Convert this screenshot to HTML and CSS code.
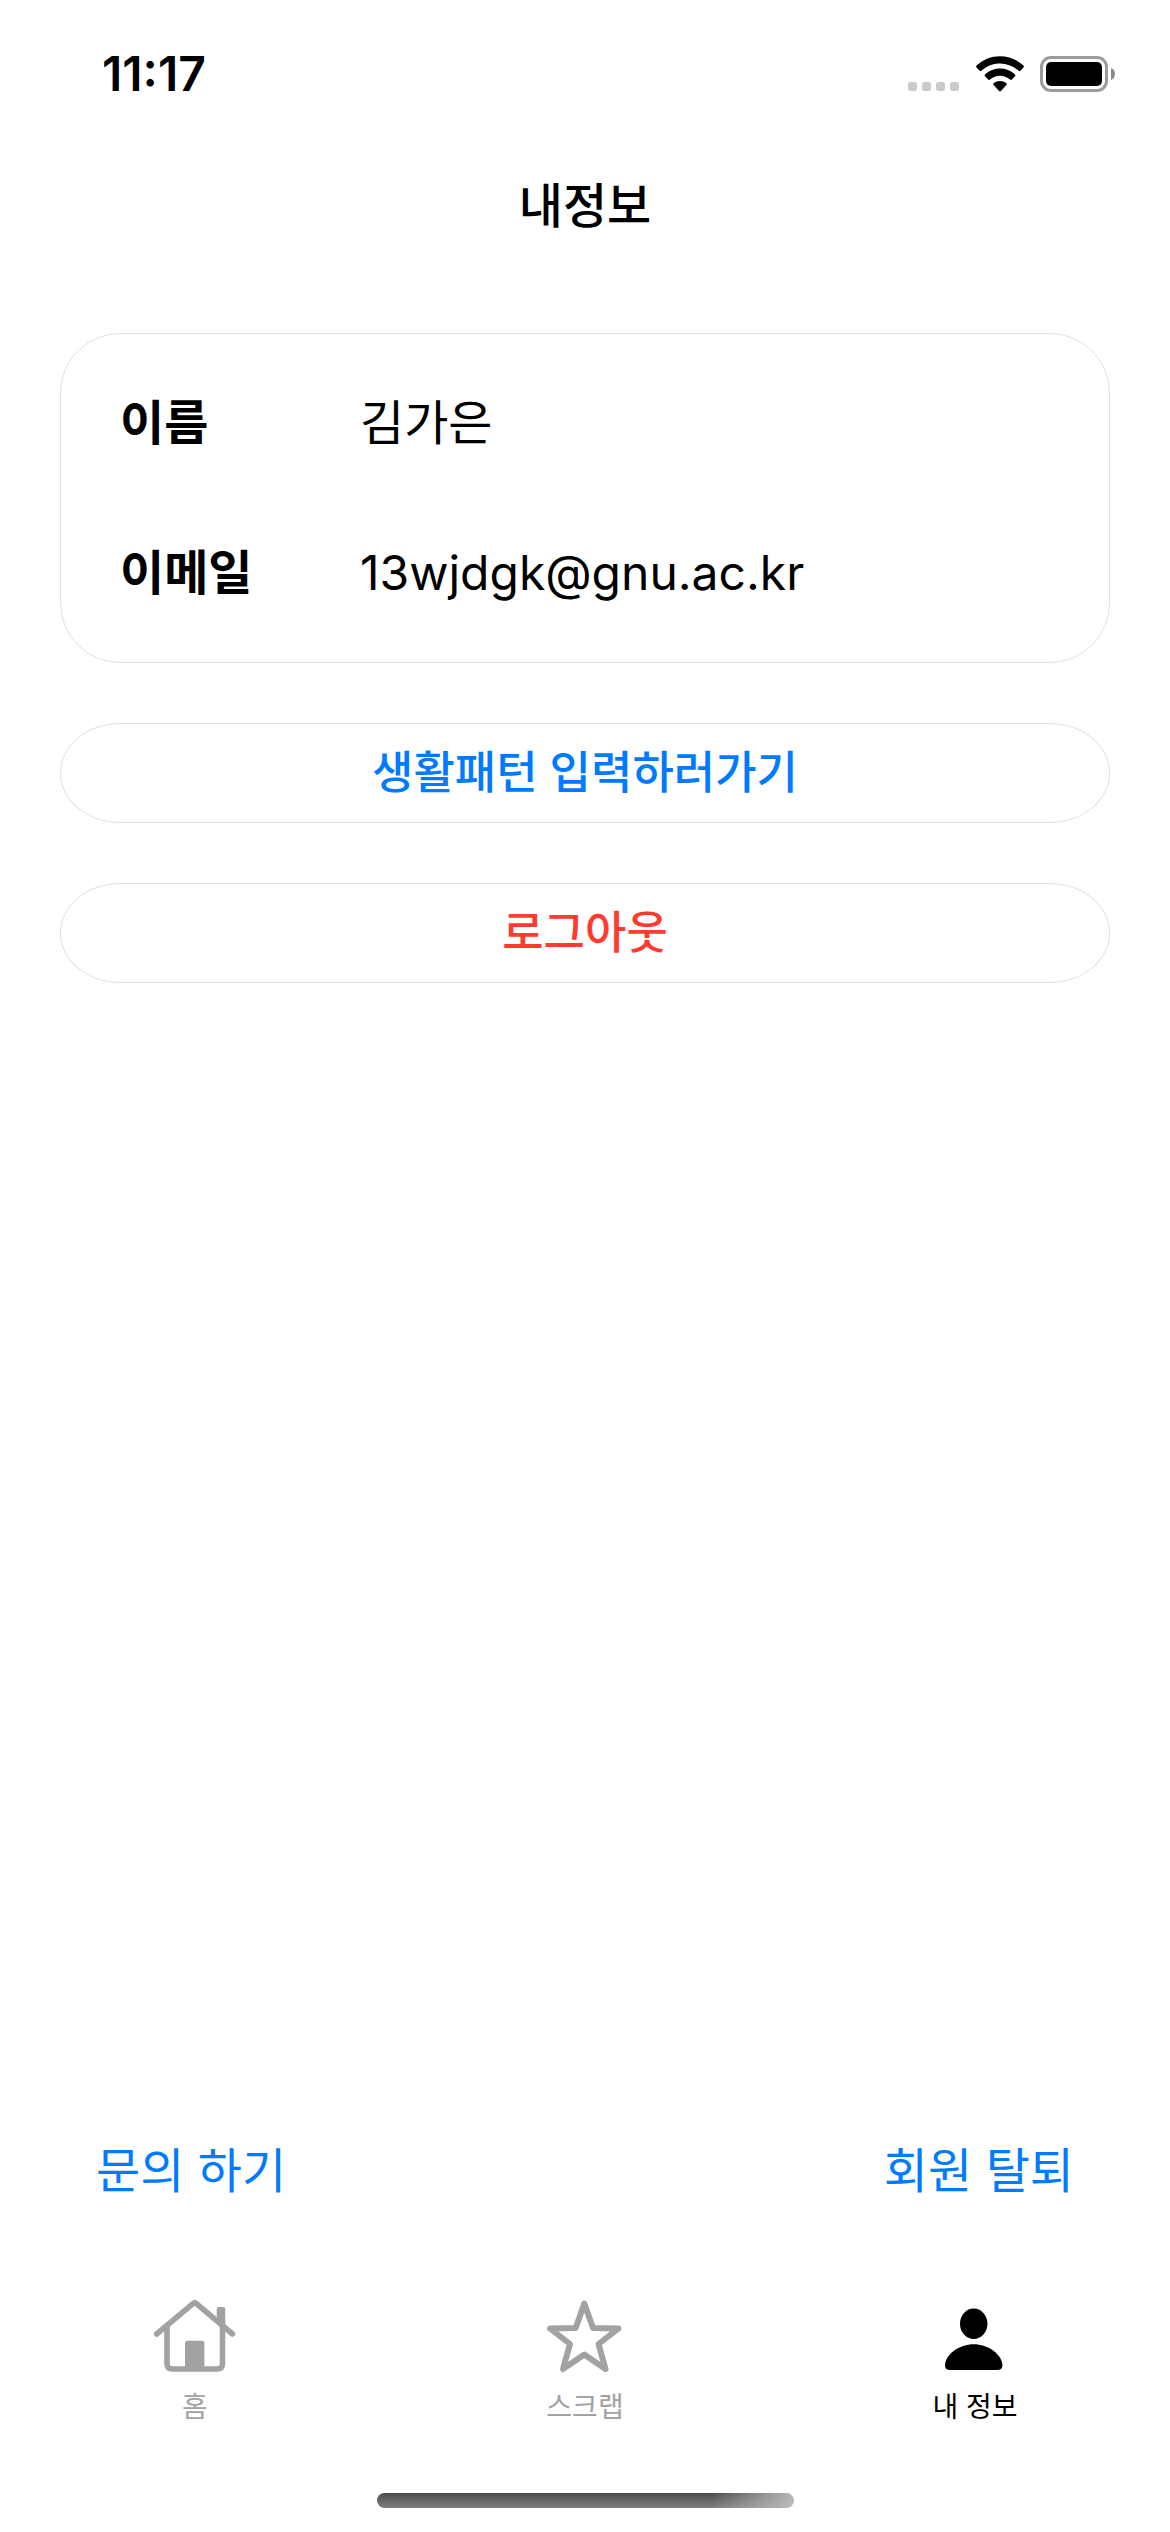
FILE: index.html
```html
<!DOCTYPE html>
<html lang="ko">
<head>
  <meta charset="utf-8">
  <meta name="viewport" content="width=device-width, initial-scale=1">
  <title>내정보</title>
  <link rel="stylesheet" href="styles.css">
</head>
<body class="screen">
  <div class="status-bar">
    <time class="clock">11:17</time>
    <div class="status-icons">
      <svg class="signal" width="52" height="36" viewBox="0 0 52 36" fill="#cacaca" aria-hidden="true">
        <rect x="0" y="26" width="9" height="9" rx="2.5"/>
        <rect x="14" y="26" width="9" height="9" rx="2.5"/>
        <rect x="28" y="26" width="9" height="9" rx="2.5"/>
        <rect x="42" y="26" width="9" height="9" rx="2.5"/>
      </svg>
      <svg class="wifi" width="48" height="36" viewBox="0 0 48 36" aria-hidden="true">
        <path d="M0.6 9.6 C13.5-2.9 34.5-2.9 47.4 9.6 Q48.3 10.5 47.4 11.4 L44.4 14.8 Q43.6 15.6 42.7 14.8 C32 4.9 16 4.9 5.3 14.8 Q4.4 15.6 3.6 14.8 L0.6 11.4 Q-0.3 10.5 0.6 9.6Z"/>
        <path d="M9 18.4 C17.5 10.6 30.5 10.6 39 18.4 Q39.9 19.3 39 20.2 L35.8 23.5 Q35 24.3 34.1 23.5 C28.2 18.4 19.8 18.4 13.9 23.5 Q13 24.3 12.2 23.5 L9 20.2 Q8.1 19.3 9 18.4Z"/>
        <path d="M17.6 27.3 C21.2 24.1 26.8 24.1 30.4 27.3 Q31.3 28.2 30.4 29.1 L24.9 34.9 Q24 35.8 23.1 34.9 L17.6 29.1 Q16.7 28.2 17.6 27.3Z"/>
      </svg>
      <svg class="battery" width="76" height="36" viewBox="0 0 76 36" aria-hidden="true">
        <rect x="1.5" y="1.5" width="65" height="33" rx="9.5" fill="none" stroke="#9b9b9b" stroke-width="3"/>
        <rect x="6" y="6" width="56" height="24" rx="5"/>
        <path d="M71 12 Q75 13.5 75 18 Q75 22.5 71 24Z" fill="#8a8a8a"/>
      </svg>
    </div>
  </div>

  <header class="title-bar">
    <h1 class="title">내정보</h1>
  </header>

  <main class="content">
    <dl class="card">
      <div class="row">
        <dt class="label">이름</dt>
        <dd class="value">김가은</dd>
      </div>
      <div class="row">
        <dt class="label">이메일</dt>
        <dd class="value">13wjdgk@gnu.ac.kr</dd>
      </div>
    </dl>
    <button class="action action-primary" type="button">생활패턴 입력하러가기</button>
    <button class="action action-danger" type="button">로그아웃</button>
    <div class="support">
      <a class="support-link" href="#contact">문의 하기</a>
      <a class="support-link" href="#withdraw">회원 탈퇴</a>
    </div>
  </main>

  <nav class="tabs" aria-label="탭">
    <a class="tab" href="#home">
      <svg class="tab-icon" viewBox="0 0 90 90" fill="none" stroke="currentColor" stroke-width="5.6" stroke-linecap="round" stroke-linejoin="round" aria-hidden="true">
        <path d="M6.7 42 L43 11.6 Q44.7 10.3 46.4 11.6 L82.5 42"/>
        <path d="M17 34 V71.5 Q17 77 22.5 77 H67 Q72.5 77 72.5 71.5 V34"/>
        <rect x="35" y="48.7" width="19.4" height="29" rx="2.5" fill="currentColor" stroke="none"/>
        <path d="M66.7 29 V17 Q66.7 15 68.7 15 H73.3 Q75.3 15 75.3 17 V37Z" fill="currentColor" stroke="none"/>
      </svg>
      <span class="tab-label">홈</span>
    </a>
    <a class="tab" href="#scrap">
      <svg class="tab-icon" viewBox="0 0 90 90" fill="none" stroke="currentColor" stroke-width="6" stroke-linejoin="round" aria-hidden="true">
        <path d="M44.3 11.5 L53 36 L78.5 36.5 L58.5 52 L65.5 77 L44.3 62.5 L23 77 L30 52 L10 36.5 L35.7 36Z"/>
      </svg>
      <span class="tab-label">스크랩</span>
    </a>
    <a class="tab tab-active" href="#me" aria-current="page">
      <svg class="tab-icon" viewBox="0 0 90 90" fill="currentColor" aria-hidden="true">
        <ellipse cx="43.7" cy="31.8" rx="13.7" ry="15.2"/>
        <path d="M43.7 52.3 C58 52.3 72.4 62.5 72.4 73.5 Q72.4 78 67 78 H20.4 Q15 78 15 73.5 C15 62.5 29.4 52.3 43.7 52.3Z"/>
      </svg>
      <span class="tab-label">내 정보</span>
    </a>
  </nav>
  <div class="home-indicator"></div>
</body>
</html>
```
FILE: styles.css
```css
* {
  box-sizing: border-box;
}

.screen {
  margin: 0;
  min-height: 100vh;
  display: flex;
  flex-direction: column;
  background: #fff;
  color: #000;
  font-family: Inter, "Noto Sans CJK KR", sans-serif;
  font-size: 48px;
  line-height: 60px;
}

.status-bar {
  display: flex;
  align-items: center;
  justify-content: space-between;
  height: 148px;
  padding: 0 54px 0 102px;
}

.clock {
  font-weight: 600;
}

.status-icons {
  display: flex;
  gap: 16px;
}

.title-bar {
  display: flex;
  align-items: center;
  justify-content: center;
  height: 116px;
}

.title {
  margin: 0;
  font-size: 48px;
  font-weight: 500;
}

.content {
  flex: 1;
  display: flex;
  flex-direction: column;
  gap: 60px;
  padding: 69px 60px 82px;
}

.card {
  display: flex;
  flex-direction: column;
  gap: 90px;
  margin: 0;
  padding: 59px;
  border: 1px solid #e1e1e1;
  border-radius: 60px;
}

.row {
  display: flex;
}

.label {
  width: 240px;
  font-weight: 700;
}

.value {
  margin: 0;
}

.action {
  height: 100px;
  padding: 0;
  border: 1px solid #e1e1e1;
  border-radius: 60px / 50px;
  background: #fff;
  font-family: inherit;
  font-size: 45px;
  font-weight: 500;
  line-height: 60px;
}

.action-primary {
  color: #007aff;
}

.action-danger {
  color: #ff3b30;
}

.support {
  display: flex;
  justify-content: space-between;
  margin-top: auto;
  padding: 0 36px;
}

.support-link {
  color: #007aff;
  text-decoration: none;
}

.tabs {
  display: grid;
  grid-template-columns: repeat(3, 1fr);
  padding: 9px 0 70px;
}

.tab {
  display: flex;
  flex-direction: column;
  align-items: center;
  gap: 9px;
  color: #a2a2a2;
  text-decoration: none;
}

.tab-active {
  color: #000;
}

.tab-icon {
  width: 90px;
  height: 90px;
}

.tab-label {
  font-size: 28px;
  line-height: 32px;
}

.home-indicator {
  align-self: center;
  width: 417px;
  height: 15px;
  margin-bottom: 24px;
  border-radius: 8px;
  background:
    linear-gradient(100deg, transparent 80%, #bbb 100%),
    linear-gradient(#4c4c4c, #808080);
}
```
